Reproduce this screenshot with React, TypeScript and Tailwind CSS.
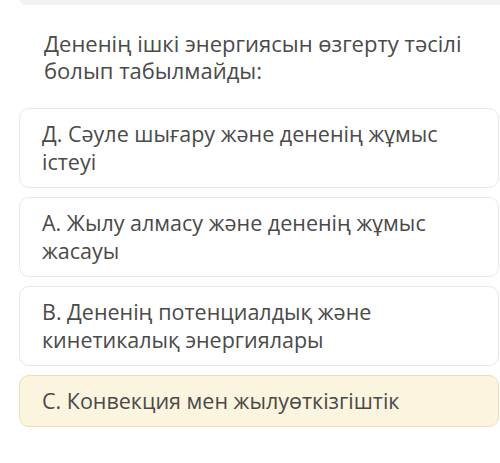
const options = [
  { text: "Д. Сәуле шығару және дененің жұмыс істеуі", picked: false },
  { text: "А. Жылу алмасу және дененің жұмыс жасауы", picked: false },
  { text: "В. Дененің потенциалдық және кинетикалық энергиялары", picked: false },
  { text: "С. Конвекция мен жылуөткізгіштік", picked: true },
]

export default function App() {
  return (
    <div
      className="h-[463px] w-[500px] overflow-hidden bg-white text-[#4a4a4a]"
      style={{ fontFamily: '"Open Sans", "Noto Sans", sans-serif' }}
    >
      {/* bottom edge of the previous card */}
      <div className="ml-[20px] h-[5px] rounded-bl-[10px] bg-[#f1f2f2]" />

      <p className="mt-[25px] pl-[44px] pr-[30px] text-[22px] leading-[27px]">
        Дененің ішкі энергиясын өзгерту тәсілі болып табылмайды:
      </p>

      <div className="ml-[19px] mr-[1px] mt-[24px] flex flex-col gap-[9px]">
        {options.map((o) => (
          <div
            key={o.text}
            className={
              o.picked
                ? "rounded-[10px] border border-[#eadfb4] bg-[#fbf4de] py-[11px] pl-[22px] pr-[40px] text-[21.5px] leading-[28px]"
                : "rounded-[10px] border border-[#e6e8e8] bg-white py-[11px] pl-[22px] pr-[40px] text-[21.5px] leading-[28px]"
            }
          >
            {o.text}
          </div>
        ))}
      </div>
    </div>
  )
}
